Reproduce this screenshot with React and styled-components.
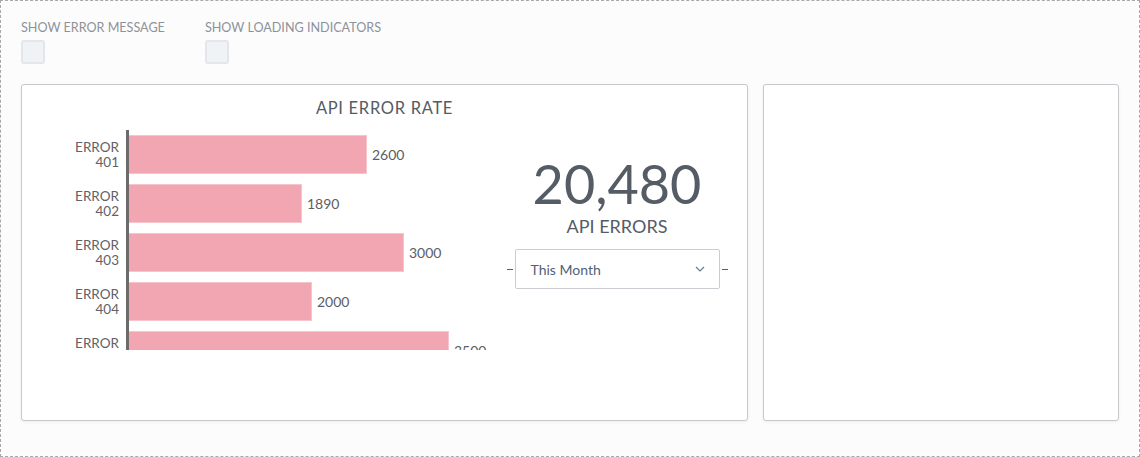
import React from "react";
import styled, { createGlobalStyle } from "styled-components";

const Global = createGlobalStyle`
  html, body { margin: 0; padding: 0; background: #fcfcfc; }
  * { box-sizing: border-box; }
  body { font-family: Lato, "Open Sans", sans-serif; }
`;

const Page = styled.div`
  height: 457px;
  border: 1px dashed #a8a8ac;
  padding: 19px 20px 0 20px;
  background: #fcfcfc;
`;

const Controls = styled.div`
  display: flex;
  gap: 40px;
`;

const ControlGroup = styled.div`
  display: flex;
  flex-direction: column;
  gap: 5px;
`;

const ControlLabel = styled.label`
  font-size: 12.6px;
  line-height: 15px;
  color: #8e9299;
  text-transform: uppercase;
`;

const Checkbox = styled.div`
  width: 24px;
  height: 24px;
  border: 2px solid #e3e7eb;
  background: #eff3f6;
  border-radius: 3px;
`;

const Cards = styled.div`
  display: grid;
  grid-template-columns: 727px 1fr;
  gap: 15px;
  margin-top: 20px;
`;

const Card = styled.div`
  height: 337px;
  background: #fff;
  border: 1px solid #c8c8cd;
  border-radius: 3px;
  box-shadow: 0 1px 3px rgba(0, 0, 0, 0.06);
  overflow: hidden;
`;

const CardTitle = styled.h2`
  margin: 13px 0 0;
  font-size: 16.5px;
  line-height: 20px;
  font-weight: 400;
  text-align: center;
  color: #555b63;
  letter-spacing: 0.7px;
`;

const CardBody = styled.div`
  display: flex;
  margin-top: 12px;
`;

const Chart = styled.div`
  width: 467px;
  height: 220px;
  overflow: hidden;
`;

const BarRow = styled.div`
  display: grid;
  grid-template-columns: 97px 1fr;
  column-gap: 7px;
  height: 49px;
`;

const BarLabel = styled.div`
  align-self: center;
  text-align: right;
  font-size: 13.5px;
  line-height: 15px;
  color: #5f6266;
`;

const Track = styled.div`
  display: flex;
  align-items: center;
  border-left: 3px solid #6b6b6b;
`;

const Bar = styled.div`
  height: 39px;
  background: #f2a6b2;
  border: 1px solid #f6c4cc;
  border-left: none;
`;

const BarValue = styled.span`
  margin-left: 5px;
  font-size: 14px;
  color: #5b5e63;
`;

const Stat = styled.div`
  flex: 1;
  display: flex;
  flex-direction: column;
  align-items: center;
  padding-top: 24px;
  padding-right: 2px;
`;

const BigNumber = styled.div`
  font-size: 54px;
  line-height: 60px;
  font-weight: 400;
  color: #555c65;
`;

const StatLabel = styled.div`
  font-size: 18px;
  line-height: 22px;
  color: #555c65;
  margin-top: 1px;
`;

const SelectRow = styled.div`
  display: flex;
  align-items: center;
  gap: 2px;
  margin-top: 12px;
`;

const Dash = styled.span`
  width: 6px;
  height: 1px;
  background: #5a5f66;
`;

const Select = styled.div`
  width: 205px;
  height: 40px;
  border: 1px solid #c9ccd1;
  border-radius: 2px;
  background: #fff;
  display: flex;
  align-items: center;
  justify-content: space-between;
  padding: 0 14px 0 15px;
  font-size: 14px;
  color: #4f6277;
`;

const Chevron = () => (
  <svg width="10" height="6" viewBox="0 0 10 6" fill="none">
    <path d="M1 1l4 4 4-4" stroke="#6a7a8b" strokeWidth="1.2" />
  </svg>
);

const data = [
  { code: 401, value: 2600 },
  { code: 402, value: 1890 },
  { code: 403, value: 3000 },
  { code: 404, value: 2000 },
  { code: 405, value: 3500 },
];

export default function App() {
  return (
    <>
      <Global />
      <Page>
        <Controls>
          <ControlGroup>
            <ControlLabel>Show Error Message</ControlLabel>
            <Checkbox />
          </ControlGroup>
          <ControlGroup>
            <ControlLabel>Show Loading Indicators</ControlLabel>
            <Checkbox />
          </ControlGroup>
        </Controls>
        <Cards>
          <Card>
            <CardTitle>API ERROR RATE</CardTitle>
            <CardBody>
              <Chart>
                {data.map((d) => (
                  <BarRow key={d.code}>
                    <BarLabel>
                      ERROR
                      <br />
                      {d.code}
                    </BarLabel>
                    <Track>
                      <Bar style={{ width: Math.round(d.value * 0.0915) }} />
                      <BarValue>{d.value}</BarValue>
                    </Track>
                  </BarRow>
                ))}
              </Chart>
              <Stat>
                <BigNumber>20,480</BigNumber>
                <StatLabel>API ERRORS</StatLabel>
                <SelectRow>
                  <Dash />
                  <Select>
                    <span>This Month</span>
                    <Chevron />
                  </Select>
                  <Dash />
                </SelectRow>
              </Stat>
            </CardBody>
          </Card>
          <Card />
        </Cards>
      </Page>
    </>
  );
}
